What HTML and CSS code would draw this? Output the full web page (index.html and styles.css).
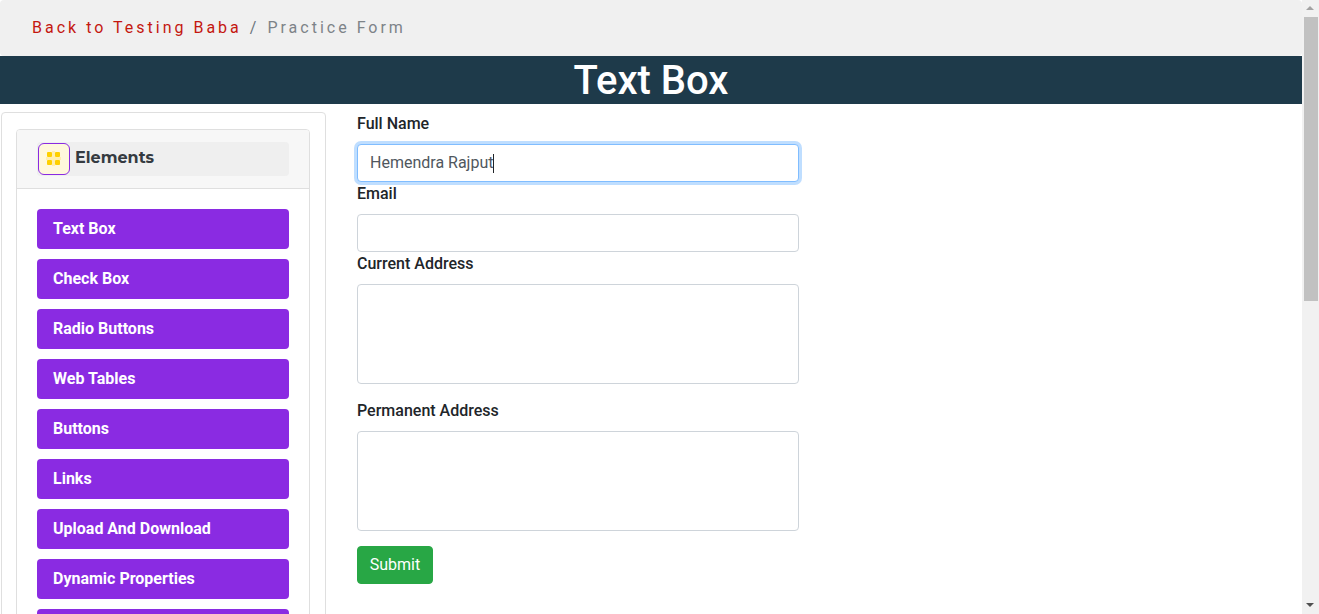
FILE: index.html
```html
<!DOCTYPE html>
<html lang="en">
<head>
<meta charset="utf-8">
<title>Text Box</title>
<link rel="stylesheet" href="styles.css">
</head>
<body>
<div class="shell">
  <div class="page">
    <nav class="crumbs"><a class="crumb-link">Back to Testing Baba</a><span class="crumb-sep">/</span><span class="crumb-current">Practice Form</span></nav>
    <h1 class="title">Text Box</h1>
    <div class="content">
      <aside class="side">
        <div class="panel">
          <div class="panel-head">
            <div class="panel-title">
              <span class="icon-box">
                <svg width="18" height="18" viewBox="0 0 18 18" class="grid-icon">
                  <path class="grid-lines" d="M8.5 1V16M1 8.5H16"/>
                  <rect class="grid-cell" x="2" y="2" width="5" height="5" rx="1"/>
                  <rect class="grid-cell" x="10" y="2" width="5" height="5" rx="1"/>
                  <rect class="grid-cell" x="2" y="10" width="5" height="5" rx="1"/>
                  <rect class="grid-cell" x="10" y="10" width="5" height="5" rx="1"/>
                </svg>
              </span>
              <span class="panel-name">Elements</span>
            </div>
          </div>
          <div class="panel-body">
            <a class="menu-btn">Text Box</a>
            <a class="menu-btn">Check Box</a>
            <a class="menu-btn">Radio Buttons</a>
            <a class="menu-btn">Web Tables</a>
            <a class="menu-btn">Buttons</a>
            <a class="menu-btn">Links</a>
            <a class="menu-btn">Upload And Download</a>
            <a class="menu-btn">Dynamic Properties</a>
            <a class="menu-btn">&nbsp;</a>
          </div>
        </div>
      </aside>
      <form class="form">
        <label class="label">Full Name</label>
        <div class="field field-focus"><span class="typed">Hemendra Rajput</span><span class="caret"></span></div>
        <label class="label">Email</label>
        <div class="field"></div>
        <label class="label">Current Address</label>
        <div class="field field-area"></div>
        <label class="label label-after-area">Permanent Address</label>
        <div class="field field-area"></div>
        <button class="submit" type="button">Submit</button>
      </form>
    </div>
  </div>
  <div class="scrollbar">
    <span class="arrow arrow-up"></span>
    <span class="thumb"></span>
    <span class="track"></span>
    <span class="arrow arrow-down"></span>
  </div>
</div>
</body>
</html>
```

FILE: styles.css
```css
* { box-sizing: border-box; }
html, body { margin: 0; height: 100%; overflow: hidden; background: #fff; }
body { font-family: Roboto, "Liberation Sans", sans-serif; font-size: 16px; line-height: 24px; color: #212529; }
.shell { display: flex; height: 614px; overflow: hidden; }
.page { flex: 1; min-width: 0; overflow: hidden; }
.crumbs { height: 56px; padding: 16px 32px 0; background: #f0f0f0; border-radius: 4px; letter-spacing: 3px; color: #6c757d; white-space: nowrap; }
.crumb-link { color: #c4170f; }
.crumb-sep { padding: 0 8px; color: #6c757d; }
.crumb-current { color: #7d8388; }
.title { margin: 0; height: 48px; padding-top: 1px; background: #1e3a4a; color: #fff; font-size: 40px; line-height: 48px; font-weight: 500; text-align: center; overflow: hidden; }
.content { display: flex; align-items: flex-start; padding: 8px 0 0 1px; }
.side { width: 325px; height: 700px; padding: 16px 15px 0 14px; border: 1px solid #dfdfdf; border-radius: 4px; flex: none; }
.panel { border: 1px solid #dfdfdf; border-radius: 4px; height: 680px; }
.panel-head { height: 59px; padding: 12px 20px 0 20px; background: #f7f7f7; border-bottom: 1px solid #dfdfdf; border-radius: 3px 3px 0 0; }
.panel-title { display: flex; align-items: center; height: 34px; padding-left: 1px; background: #efefef; border-radius: 4px; }
.icon-box { display: flex; align-items: center; justify-content: center; width: 32px; height: 32px; background: #fff8dc; border: 1px solid #8a2be2; border-radius: 6px; flex: none; }
.grid-lines { stroke: #ffeeb0; stroke-width: 3; fill: none; }
.grid-cell { fill: #ffd000; }
.panel-name { margin-left: 5px; font-family: Montserrat, "Open Sans", sans-serif; font-size: 16px; font-weight: 700; color: #343a40; position: relative; top: -1px; }
.panel-body { display: flex; flex-direction: column; gap: 10px; padding: 20px 20px 0; }
.menu-btn { display: block; height: 40px; padding: 8px 16px; background: #8a2be2; border-radius: 4px; color: #fff; font-weight: 700; white-space: nowrap; }
.form { width: 442px; margin-left: 31px; display: flex; flex-direction: column; align-items: stretch; }
.label { display: block; height: 24px; margin-bottom: 8px; font-weight: 500; }
.label-after-area { margin-top: 15px; }
.field { height: 38px; padding: 6px 12px; border: 1px solid #ced4da; border-radius: 4px; background: #fff; color: #50575e; white-space: nowrap; }
.field-focus { border-color: #80bdff; box-shadow: 0 0 0 3px rgba(0, 123, 255, 0.25); }
.typed { display: inline-block; vertical-align: top; }
.caret { display: inline-block; vertical-align: top; width: 1px; height: 19px; margin-top: 3px; background: #212529; }
.field-area { height: 100px; }
.submit { align-self: flex-start; width: 76px; height: 38px; margin-top: 15px; padding: 0; border: 1px solid #28a745; border-radius: 4px; background: #28a745; color: #fff; font: 400 16px/24px Roboto, "Liberation Sans", sans-serif; }
.scrollbar { flex: none; width: 17px; height: 614px; display: flex; flex-direction: column; background: #f1f1f1; }
.arrow { flex: none; height: 17px; position: relative; }
.arrow::after { content: ""; position: absolute; left: 4px; border-left: 4px solid transparent; border-right: 4px solid transparent; }
.arrow-up::after { top: 6px; border-bottom: 4px solid #a3a3a3; }
.arrow-down::after { top: 6px; border-top: 4px solid #505050; }
.thumb { flex: none; height: 284px; margin: 0 1px 0 2px; background: #c1c1c1; width: 14px; }
.track { flex: 1; }
```
